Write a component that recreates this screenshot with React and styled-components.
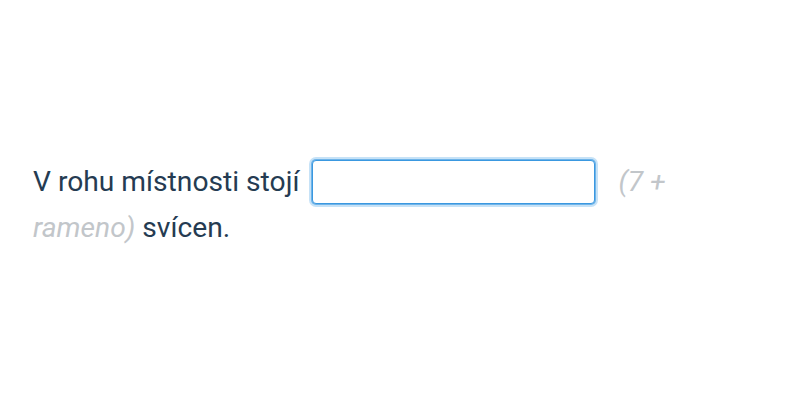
import React from "react";
import styled, { createGlobalStyle } from "styled-components";

const Global = createGlobalStyle`
  html, body { margin: 0; padding: 0; background: #fff; }
  body { font-family: Roboto, "Noto Sans", sans-serif; }
`;

const Page = styled.div`
  box-sizing: border-box;
  height: 400px;
  display: flex;
  align-items: center;
  padding: 10px 33px 0;
`;

const Sentence = styled.p`
  margin: 0;
  width: 680px;
  font-size: 28.2px;
  line-height: 46px;
  color: #253b52;
`;

const Blank = styled.input`
  box-sizing: border-box;
  width: 283px;
  height: 44px;
  margin: 0 16px 0 13px;
  vertical-align: middle;
  border: 1px solid #3a98e0;
  border-radius: 4px;
  box-shadow: 0 0 0 1px #6fb4e9, 0 0 0 3px #c6e2f7;
  outline: none;
  background: #fff;
  font: inherit;
  position: relative;
  top: -1px;
`;

const Hint = styled.span`
  font-style: italic;
  color: #c2c6ca;
`;

export default function App() {
  return (
    <>
      <Global />
      <Page>
        <Sentence>
          V rohu místnosti stojí<Blank type="text" /> <Hint>(7 + rameno)</Hint> svícen.
        </Sentence>
      </Page>
    </>
  );
}
